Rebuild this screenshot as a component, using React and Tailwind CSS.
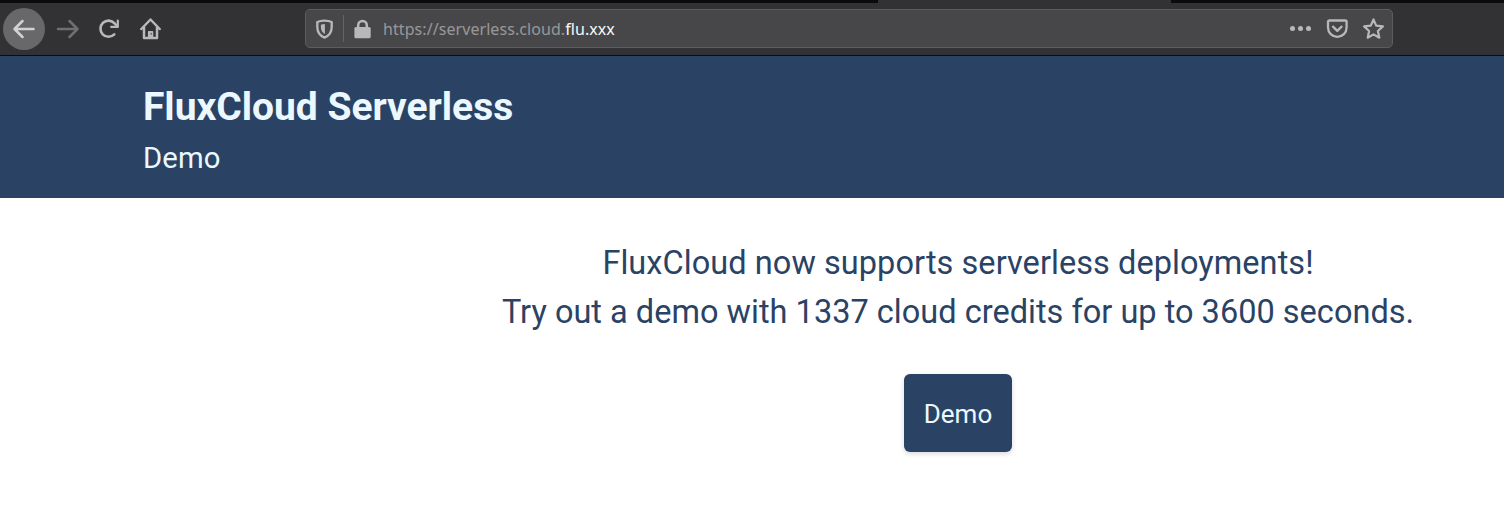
function BackIcon() {
  return (
    <svg className="size-6" viewBox="0 0 24 24" fill="none" stroke="currentColor" strokeWidth="2.5" strokeLinecap="round" strokeLinejoin="round">
      <path d="M21.500 12H2.500M10.500 4 2.500 12l8 8" />
    </svg>
  );
}

function ForwardIcon() {
  return (
    <svg className="size-6" viewBox="0 0 24 24" fill="none" stroke="currentColor" strokeWidth="2.500" strokeLinecap="round" strokeLinejoin="round">
      <path d="M2 12h19.500M13.500 4l8 8-8 8" />
    </svg>
  );
}

function ReloadIcon() {
  return (
    <svg className="size-6" viewBox="0 0 24 24" fill="none" stroke="currentColor" strokeWidth="2.600" strokeLinecap="round" strokeLinejoin="round">
      <path d="M17.300 17.400A8.100 8.100 0 1 1 17.600 6.300L19.500 8.500" />
      <path d="M20.800 3.500v6.400h-6.600" strokeWidth="2.200" />
    </svg>
  );
}

function HomeIcon() {
  return (
    <svg className="size-6" viewBox="0 0 24 24" fill="none" stroke="currentColor" strokeWidth="2.500" strokeLinecap="round" strokeLinejoin="round">
      <path d="M3.300 12 12.500 2.500l9.200 9.500M6 10.500V21h13V10.500" />
      <path d="M10.800 21v-6.200h3.600V21z" fill="currentColor" strokeWidth="1.800" />
      <path d="M13.300 16.500v.6" stroke="#68686a" strokeWidth="1.600" />
    </svg>
  );
}

function ShieldIcon() {
  return (
    <svg className="h-5 w-[18px]" viewBox="0 0 18 20" fill="none" stroke="currentColor" strokeWidth="2.300" strokeLinejoin="round">
      <path d="M8.500 1.600C11 1.600 13.500 2 15.700 3v5c0 5-2.200 8.600-7.200 10.600C3.500 16.600 1.300 13 1.300 8V3C3.500 2 6 1.600 8.500 1.600z" />
      <path d="M8.900 5C7.500 5 6 5.300 4.900 5.700V8c0 3.200 1.300 5.600 4 7.100z" fill="currentColor" stroke="none" />
    </svg>
  );
}

function LockIcon() {
  return (
    <svg className="h-5 w-[18px]" viewBox="0 0 18 20">
      <path d="M4.200 9V6.200a4.300 4.300 0 0 1 8.600 0V9" fill="none" stroke="currentColor" strokeWidth="2.500" />
      <rect x="0.400" y="8" width="16.300" height="11.300" rx="1.500" fill="currentColor" />
    </svg>
  );
}

function PocketIcon() {
  return (
    <svg className="size-[22px]" viewBox="0 0 22 22" fill="none" stroke="currentColor" strokeWidth="2.300" strokeLinecap="round" strokeLinejoin="round">
      <path d="M3.400 2.500h15.800a1.400 1.400 0 0 1 1.400 1.400v5.600a9.300 9.300 0 0 1-18.600 0V3.900A1.400 1.400 0 0 1 3.400 2.500z" />
      <path d="m7 8.700 4.300 4.100 4.300-4.100" />
    </svg>
  );
}

function StarIcon() {
  return (
    <svg className="size-[22px]" viewBox="0 0 22 22" fill="none" stroke="currentColor" strokeWidth="2.200" strokeLinejoin="round">
      <path d="m11.500 1.500 2.700 6.100 6.700.8-5 4.600 1.400 6.700-5.800-3.300-5.800 3.300 1.400-6.700-5-4.600 6.700-.8z" />
    </svg>
  );
}

export default function App() {
  return (
    <div className="h-[505px] overflow-hidden bg-white font-['Roboto',sans-serif]">
      <div className="flex h-[3px] bg-[#0b0b0c] pl-[878px]">
        <div className="w-[293px] bg-[#323234]" />
      </div>
      <nav className="flex h-[53px] items-start border-b border-[#0c0c0d] bg-[#323234] pl-[3px] text-[#b8b8b9]">
        <button className="mt-[5px] flex size-[42px] items-center justify-center rounded-full bg-[#68686a] text-[#d2d2d3]"><BackIcon /></button>
        <button className="mt-[14px] ml-[11px] text-[#6f6f71]"><ForwardIcon /></button>
        <button className="mt-[14px] ml-[17px]"><ReloadIcon /></button>
        <button className="mt-[14px] ml-[17px]"><HomeIcon /></button>
        <div className="mt-[6px] ml-[143px] flex h-[39px] w-[1088px] items-center rounded-[5px] border border-[#5d5d5f] bg-[#474749] pr-2 pl-[10px]">
          <ShieldIcon />
          <div className="ml-[9px] h-[27px] w-px bg-[#5b6470]" />
          <div className="ml-[10px] flex"><LockIcon /></div>
          <p className="ml-[11px] flex-1 pt-px font-['Noto_Sans',sans-serif] text-[16px] tracking-[0.07px] text-[#98989a]">
            https://serverless.cloud.<span className="text-[#f9f9fa]">flu.xxx</span>
          </p>
          <div className="mr-[15px] flex gap-[3px]">
            <span className="size-[5px] rounded-full bg-[#b8b8b9]" />
            <span className="size-[5px] rounded-full bg-[#b8b8b9]" />
            <span className="size-[5px] rounded-full bg-[#b8b8b9]" />
          </div>
          <PocketIcon />
          <div className="ml-[14px]"><StarIcon /></div>
        </div>
      </nav>
      <header className="h-[142px] bg-[#2a4365] px-[143px] pt-[27px] text-[#ebf8ff]">
        <h1 className="text-[39px] leading-[49px] font-bold tracking-[-0.03px]">FluxCloud Serverless</h1>
        <p className="mt-1 text-[29.25px] leading-[44px] tracking-[0.1px]">Demo</p>
      </header>
      <main className="ml-[412px] flex flex-col items-center pt-[41px] text-center text-[#2a4365]">
        <p className="text-[32.5px] leading-[49px]">
          <span className="tracking-[0.06px]">FluxCloud now supports serverless deployments!</span><br />
          <span className="tracking-[0.015px]">Try out a demo with 1337 cloud credits for up to 3600 seconds.</span>
        </p>
        <button className="mt-[37px] h-[78px] w-[108px] rounded-[6px] bg-[#2a4365] pt-[2px] text-[26px] text-[#ebf8ff] shadow-[0_2px_5px_rgba(0,0,0,0.15)]">Demo</button>
      </main>
    </div>
  );
}
